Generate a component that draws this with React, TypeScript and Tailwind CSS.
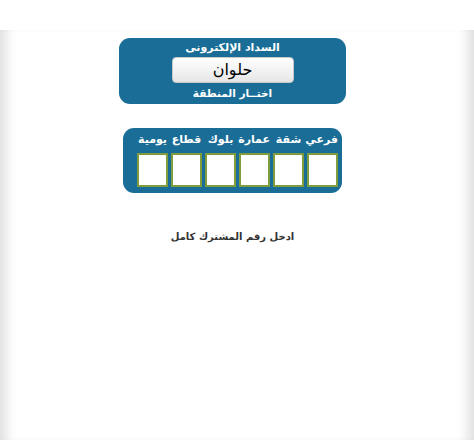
export default function App() {
  const labels = ['فرعي', 'شقة', 'عمارة', 'بلوك', 'قطاع', 'يومية'];

  return (
    <div dir="rtl" className="h-[440px] w-[474px] overflow-hidden bg-white font-['DejaVu_Sans',sans-serif]">
      <div className="mt-[30px] h-[410px] shadow-[inset_14px_0_12px_-8px_rgba(0,0,0,0.13),inset_-14px_0_12px_-8px_rgba(0,0,0,0.13)]">
        <div className="flex flex-col items-center pt-[8px]">
          {/* area select */}
          <div className="mr-[9px] flex h-[66px] w-[227px] flex-col items-center rounded-[11px] bg-[#196d96] pt-[1px]">
            <div className="text-[11px] font-bold leading-[17px] text-white">السداد الإلكترونى</div>
            <div className="mt-[1px] flex h-[26px] w-[122px] items-center justify-center rounded-[4px] border border-[#c9c9c9] bg-gradient-to-b from-white to-[#e6e6e6] text-[16px] text-black">
              حلوان
            </div>
            <div className="mt-[2px] text-[10.5px] font-bold leading-[16px] text-white">اختــار المنطقة</div>
          </div>

          {/* subscriber number */}
          <div className="mr-[9px] mt-[24px] flex h-[65px] w-[219px] flex-col items-center rounded-[11px] bg-[#196d96] pl-[10px] pt-[2px]">
            <div className="grid grid-cols-6 gap-x-[3px]">
              {labels.map((l) => (
                <div key={l} className="w-[31px] text-center text-[11px] font-bold leading-[20px] text-white whitespace-nowrap">
                  {l}
                </div>
              ))}
              {labels.map((l) => (
                <div key={l + '-box'} className="mt-[3px] h-[34px] w-[31px] border-2 border-[#7f9d3c] bg-white" />
              ))}
            </div>
          </div>

          <div className="mr-[9px] mt-[36px] text-[10px] font-bold text-[#333]">ادخل رقم المشترك كامل</div>
        </div>
      </div>
    </div>
  );
}
